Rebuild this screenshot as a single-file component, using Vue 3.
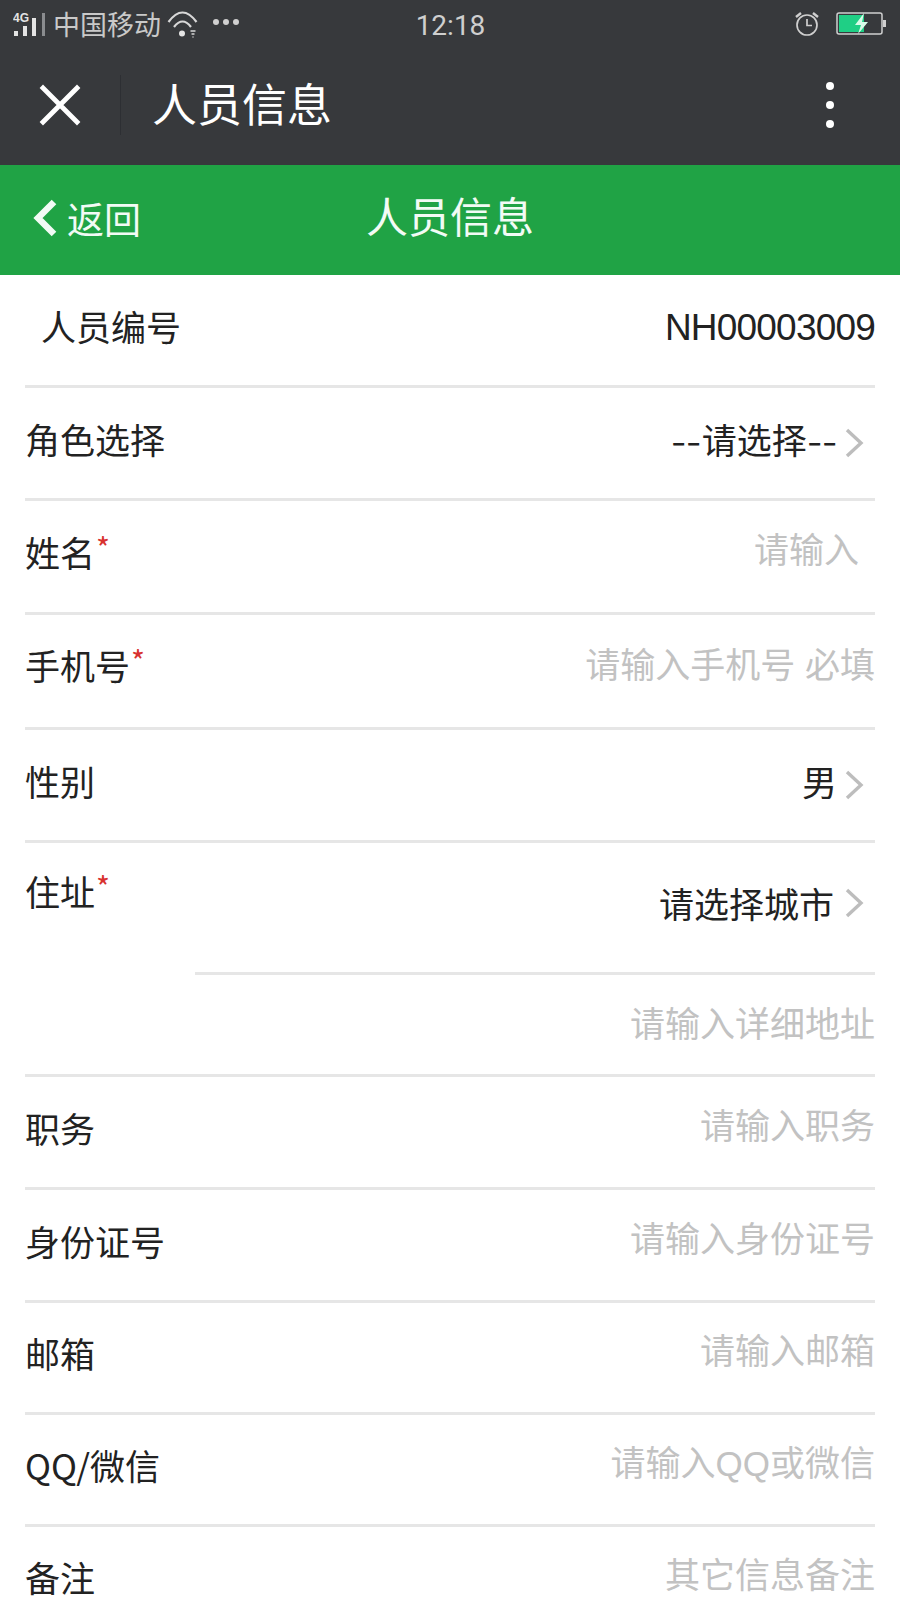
<script setup>
const rows = [
  { label: '角色选择', value: '请选择', dashed: true, arrow: true, h: 'h113' },
  { label: '姓名', req: true, ph: '请输入', h: 'h114', inset: true },
  { label: '手机号', req: true, ph: '请输入手机号 必填', h: 'h115', high: true },
  { label: '性别', value: '男', arrow: true, h: 'h113' },
]
const rows2 = [
  { label: '职务', ph: '请输入职务', h: 'h113' },
  { label: '身份证号', ph: '请输入身份证号', h: 'h113' },
  { label: '邮箱', ph: '请输入邮箱', h: 'h112' },
  { label: 'QQ/微信', ph: '请输入QQ或微信', h: 'h112' },
  { label: '备注', ph: '其它信息备注', h: 'h112' },
]
</script>

<template>
  <div class="page">
    <header class="chrome">
      <div class="status">
        <div class="status-left">
          <svg class="signal" width="34" height="26" viewBox="0 0 34 26">
            <text x="0" y="11" class="net">4G</text>
            <rect x="1" y="20" width="4" height="5" fill="#e4e4e4" />
            <rect x="10" y="15" width="4" height="10" fill="#e4e4e4" />
            <rect x="19" y="7" width="4" height="18" fill="#e4e4e4" />
            <rect x="29" y="2" width="3" height="23" fill="#8a8c8f" />
          </svg>
          <span class="carrier">中国移动</span>
          <svg class="wifi" width="32" height="27" viewBox="0 0 32 27" fill="none" stroke="#d8d8d8" stroke-width="2.2">
            <path d="M1.5 11Q15.5 -8 29.5 11" />
            <path d="M7 16Q15.5 5 24 16" />
            <circle cx="15" cy="22.5" r="3" fill="#e4e4e4" stroke="none" />
            <path d="M23.5 20h5M24.5 23h3M25.5 26h1" stroke-width="1.6" />
          </svg>
          <span class="more-dots"><i></i><i></i><i></i></span>
        </div>
        <span class="time">12:18</span>
        <div class="status-right">
          <svg width="26" height="26" viewBox="0 0 26 26" fill="none" stroke="#cfcfcf" stroke-width="1.7">
            <circle cx="13" cy="14" r="10" />
            <path d="M13 8v6.5h5" />
            <path d="M2 6l5-4M24 6l-5-4" stroke-width="2.4" />
          </svg>
          <svg width="52" height="24" viewBox="0 0 52 24">
            <rect x="1" y="1" width="45" height="21" rx="2" fill="none" stroke="#cfcfcf" stroke-width="1.5" />
            <rect x="3" y="3" width="25" height="17" fill="#1fcf85" />
            <rect x="47" y="8" width="3" height="7" fill="#cfcfcf" />
            <path d="M28 1l-9 12h6l-3 9 10-12h-6z" fill="#d9fbe9" />
          </svg>
        </div>
      </div>
      <div class="webview-bar">
        <svg class="close" width="44" height="44" viewBox="0 0 44 44" stroke="#fff" stroke-width="4.8" stroke-linecap="square">
          <path d="M5 5L39 39M39 5L5 39" />
        </svg>
        <span class="divider"></span>
        <span class="webview-title">人员信息</span>
        <span class="kebab"><i></i><i></i><i></i></span>
      </div>
    </header>

    <div class="appbar">
      <div class="back">
        <svg width="26" height="38" viewBox="0 0 26 38" fill="none" stroke="#f2fbf5" stroke-width="6.5">
          <path d="M22 3L6 19L22 35" />
        </svg>
        <span>返回</span>
      </div>
      <div class="app-title">人员信息</div>
    </div>

    <main class="form">
      <div class="row h113">
        <span class="label indented">人员编号</span>
        <span class="value latin">NH00003009</span>
      </div>
      <div v-for="r in rows" :key="r.label" class="row" :class="r.h">
        <span class="label" :class="{ up: r.high }">{{ r.label }}<sup v-if="r.req" class="star">*</sup></span>
        <span v-if="r.value" class="value"><span v-if="r.dashed" class="dash">--</span>{{ r.value }}<span v-if="r.dashed" class="dash">--</span></span>
        <span v-else class="ph" :class="{ inset: r.inset }">{{ r.ph }}</span>
        <svg v-if="r.arrow" class="chev" width="20" height="32" viewBox="0 0 20 32" fill="none" stroke="#bdbdbd" stroke-width="3.4">
          <path d="M2 3L16 16L2 29" />
        </svg>
      </div>
      <div class="address">
        <div class="addr-top">
          <span class="label addr-label">住址<sup class="star">*</sup></span>
          <div class="addr-city">
            <span class="value">请选择城市</span>
            <svg class="chev city-chev" width="20" height="32" viewBox="0 0 20 32" fill="none" stroke="#bdbdbd" stroke-width="3.4">
              <path d="M2 3L16 16L2 29" />
            </svg>
          </div>
        </div>
        <div class="addr-bottom"><span class="ph flat">请输入详细地址</span></div>
      </div>
      <div v-for="r in rows2" :key="r.label" class="row" :class="r.h">
        <span class="label">{{ r.label }}</span>
        <span class="ph">{{ r.ph }}</span>
      </div>
    </main>
  </div>
</template>

<style scoped>
.page {
  width: 900px;
  height: 1600px;
  overflow: hidden;
  background: #fff;
  font-family: "Liberation Sans", "Noto Sans CJK SC", sans-serif;
  color: #222;
}
.chrome { background: #37393c; height: 165px; }
.status {
  height: 48px;
  display: grid;
  grid-template-columns: 1fr auto 1fr;
  align-items: center;
  padding: 0 12px 0 13px;
}
.status-left { display: flex; align-items: center; gap: 6px; }
.net { font: bold 12px "Liberation Sans", sans-serif; fill: #e4e4e4; }
.carrier { font-size: 27px; line-height: 36px; color: #c9c9c9; font-family: "Noto Sans CJK SC", sans-serif; margin-bottom: 1px; }
.more-dots { display: flex; gap: 4px; margin-left: 8px; margin-bottom: 4px; }
.more-dots i { width: 6px; height: 6px; border-radius: 50%; background: #d0d0d0; }
.time { font: 28px Roboto, sans-serif; color: #cfcfcf; margin-top: 2px; }
.status-right { display: flex; justify-content: flex-end; align-items: center; gap: 16px; }
.webview-bar { height: 117px; display: flex; align-items: center; padding-left: 38px; padding-bottom: 3px; box-sizing: border-box; }
.close { flex: none; }
.divider { width: 1px; height: 60px; background: #2d2f33; margin-left: 38px; }
.webview-title { font-size: 45px; line-height: 60px; color: #fff; margin-left: 31px; margin-bottom: 4px; font-family: "Noto Sans CJK SC", sans-serif; }
.kebab { margin-left: auto; margin-right: 66px; display: flex; flex-direction: column; gap: 11px; }
.kebab i { width: 8px; height: 8px; border-radius: 50%; background: #fff; }
.appbar {
  position: relative;
  height: 110px;
  background: #20a345;
  color: #f2fbf5;
  display: flex;
  align-items: center;
  justify-content: center;
}
.back {
  position: absolute;
  left: 32px;
  top: 31px;
  display: flex;
  align-items: center;
  gap: 9px;
  font-size: 37px;
  line-height: 44px;
  font-family: "Noto Sans CJK SC", sans-serif;
}
.app-title { font-size: 42px; line-height: 60px; font-family: "Noto Sans CJK SC", sans-serif; margin-bottom: 10px; }
.form { padding: 0 25px; }
.row {
  display: flex;
  align-items: center;
  border-bottom: 3px solid #e6e6e6;
  box-sizing: border-box;
  padding-bottom: 9px;
}
.h112 { height: 112px; }
.h113 { height: 113px; }
.h114 { height: 114px; }
.h115 { height: 115px; }
.label, .value, .ph { line-height: 34px; white-space: nowrap; }
.label { font-size: 35px; font-family: "Noto Sans CJK SC", sans-serif; color: #222; }
.indented { margin-left: 16px; }
.up { margin-bottom: 4px; }
.star { color: #d8322f; font-size: 30px; line-height: 0; vertical-align: 7px; margin-left: 1px; }
.value { margin-left: auto; font-size: 35px; color: #222; font-family: "Noto Sans CJK SC", sans-serif; }
.value.latin { font-family: "Liberation Sans", sans-serif; font-size: 37px; letter-spacing: -0.8px; margin-top: 4px; }
.dash { display: inline-block; transform: scaleX(1.22); margin: 0 3px; }
.ph { margin-left: auto; font-size: 35px; color: #c2c2c2; font-family: "Liberation Sans", "Noto Sans CJK SC", sans-serif; margin-bottom: 2px; }
.ph.flat { margin-bottom: 0; }
.ph.inset { margin-right: 16px; }
.chev { margin-left: 8px; margin-right: 10px; flex: none; margin-top: 9px; }
.chev.city-chev { margin-left: 11px; margin-top: 0; }
.address { border-bottom: 3px solid #e6e6e6; height: 234px; box-sizing: border-box; }
.addr-top { display: flex; height: 132px; box-sizing: border-box; }
.addr-label { padding-top: 31px; width: 170px; flex: none; }
.addr-city { flex: 1; display: flex; align-items: center; border-bottom: 3px solid #e6e6e6; padding-bottom: 9px; }
.addr-bottom { display: flex; align-items: center; height: 99px; }
</style>
